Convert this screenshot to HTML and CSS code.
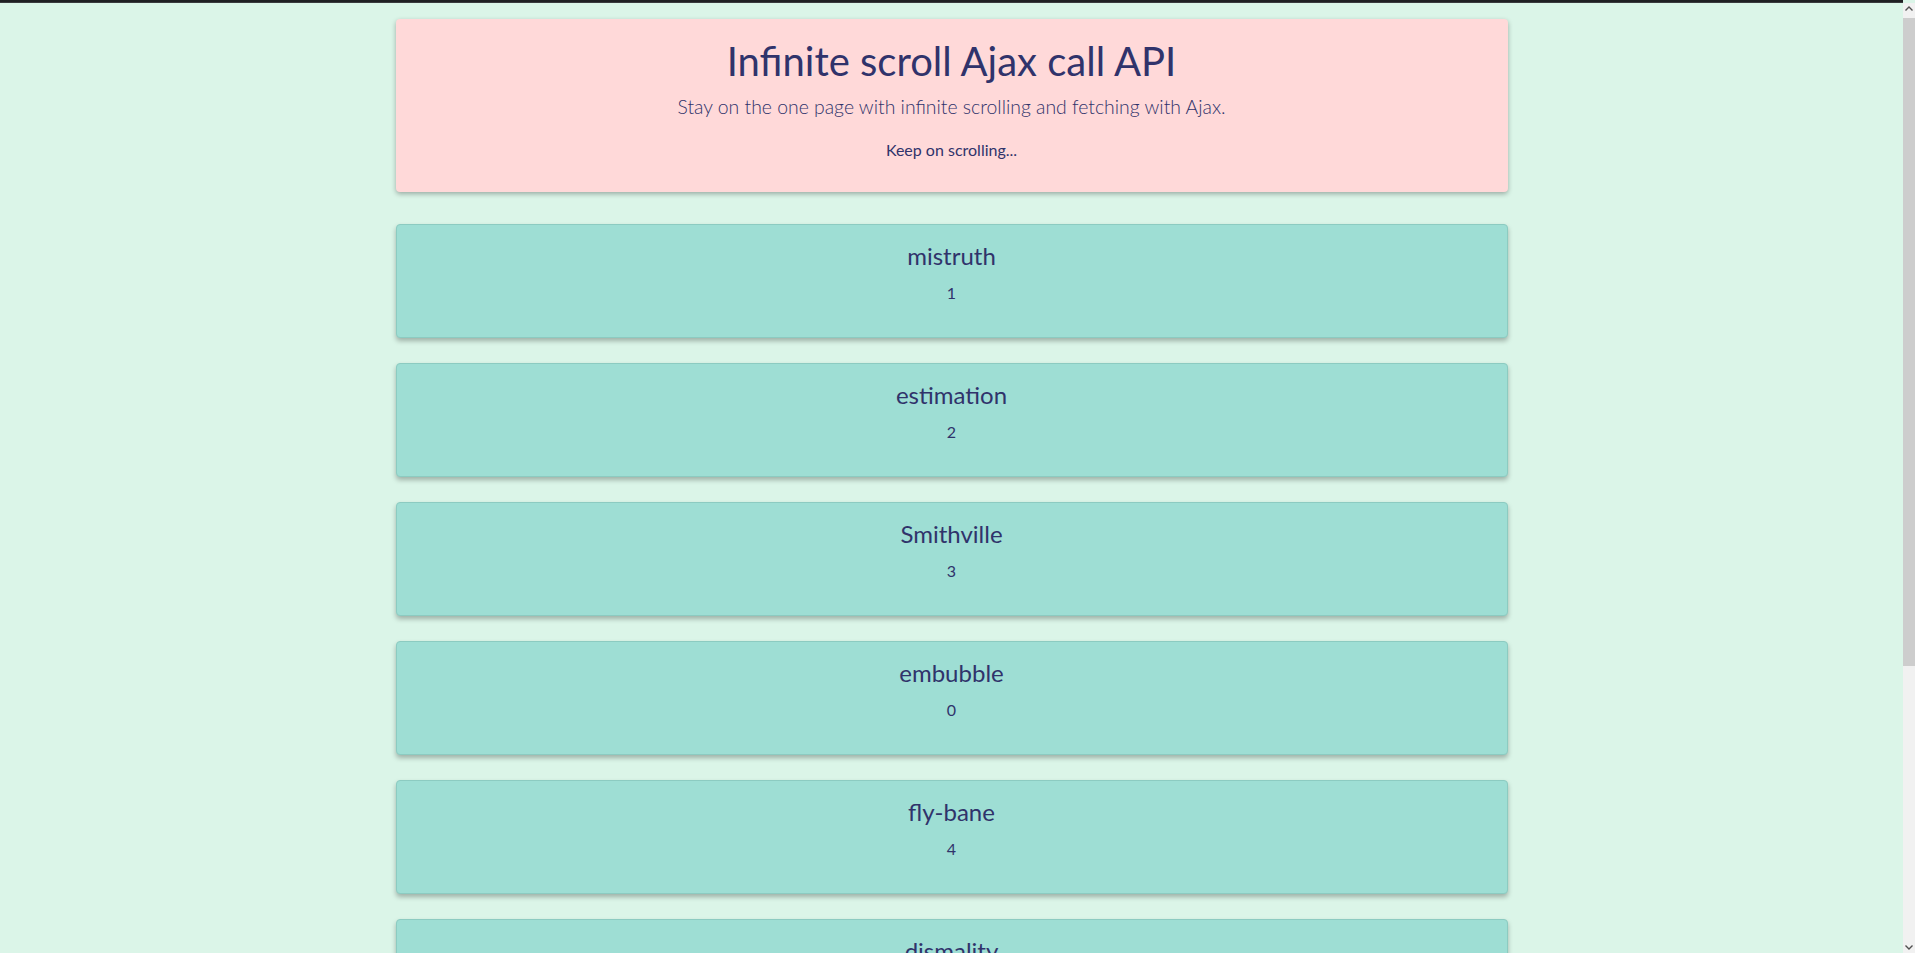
FILE: index.html
```html
<!DOCTYPE html>
<html lang="en">
<head>
<meta charset="utf-8">
<title>Infinite scroll Ajax call API</title>
<link rel="stylesheet" href="styles.css">
</head>
<body>
<div class="topbar"></div>
<main class="container">
  <header class="hero">
    <h1 class="hero-title">Infinite scroll Ajax call API</h1>
    <p class="hero-lead">Stay on the one page with infinite scrolling and fetching with Ajax.</p>
    <p class="hero-note">Keep on scrolling...</p>
  </header>
  <section class="posts">
    <article class="post"><h4 class="post-title">mistruth</h4><p class="post-num">1</p></article>
    <article class="post"><h4 class="post-title">estimation</h4><p class="post-num">2</p></article>
    <article class="post"><h4 class="post-title">Smithville</h4><p class="post-num">3</p></article>
    <article class="post"><h4 class="post-title">embubble</h4><p class="post-num">0</p></article>
    <article class="post"><h4 class="post-title">fly-bane</h4><p class="post-num">4</p></article>
    <article class="post"><h4 class="post-title">dismality</h4><p class="post-num">5</p></article>
    <article class="post"><h4 class="post-title">overshine</h4><p class="post-num">6</p></article>
  </section>
</main>
<div class="scrollbar" aria-hidden="true">
  <svg class="sb-arrow" width="12" height="12" viewBox="0 0 12 12"><polyline points="2.5,7.5 6,4 9.5,7.5" fill="none" stroke="#505050" stroke-width="1.4"/></svg>
  <div class="sb-track"><div class="sb-thumb"></div></div>
  <svg class="sb-arrow" width="12" height="12" viewBox="0 0 12 12"><polyline points="2.5,4.5 6,8 9.5,4.5" fill="none" stroke="#505050" stroke-width="1.4"/></svg>
</div>
</body>
</html>
```

FILE: styles.css
```css
html, body {
  margin: 0;
  padding: 0;
}
body {
  background: #dbf5e8;
  color: #30336b;
  font-family: Lato, "Open Sans", sans-serif;
  padding-right: 12px;
}
.topbar {
  height: 2px;
  background: #1f2023;
  border-bottom: 1px solid #3a3b3e;
}
.container {
  max-width: 1112px;
  margin: 0 auto;
  padding-top: 16px;
  padding-bottom: 40px;
}
.hero {
  background: #ffd9d9;
  border-radius: 4px;
  box-shadow: 0 2px 5px rgba(0, 0, 0, 0.3);
  padding: 16px;
  text-align: center;
}
.hero-title {
  margin: 0 0 7px;
  padding-top: 3px;
  font-size: 40px;
  line-height: 47px;
  font-weight: 400;
}
.hero-lead {
  margin: 0 0 16px;
  font-size: 19.4px;
  line-height: 30px;
  font-weight: 300;
}
.hero-note {
  margin: 0 0 14px;
  font-size: 16px;
  line-height: 24px;
}
.posts {
  display: flex;
  flex-direction: column;
  gap: 25px;
  margin-top: 32px;
}
.post {
  background: #9eded4;
  border: 1px solid #8ccbc1;
  border-radius: 4px;
  box-shadow: 0 3px 5px rgba(0, 0, 0, 0.28);
  padding: 16px;
  text-align: center;
}
.post-title {
  margin: 0 0 11px;
  font-size: 24px;
  line-height: 29px;
  font-weight: 400;
}
.post-num {
  margin: 0 0 16px;
  font-size: 16px;
  line-height: 24px;
}
.scrollbar {
  position: fixed;
  top: 3px;
  right: 0;
  bottom: 0;
  width: 12px;
  background: #f1f1f1;
  display: flex;
  flex-direction: column;
}
.sb-arrow {
  display: block;
  flex: none;
}
.sb-track {
  flex: 1;
  padding-top: 3px;
}
.sb-thumb {
  height: 648px;
  background: #cdcdcd;
}
```
